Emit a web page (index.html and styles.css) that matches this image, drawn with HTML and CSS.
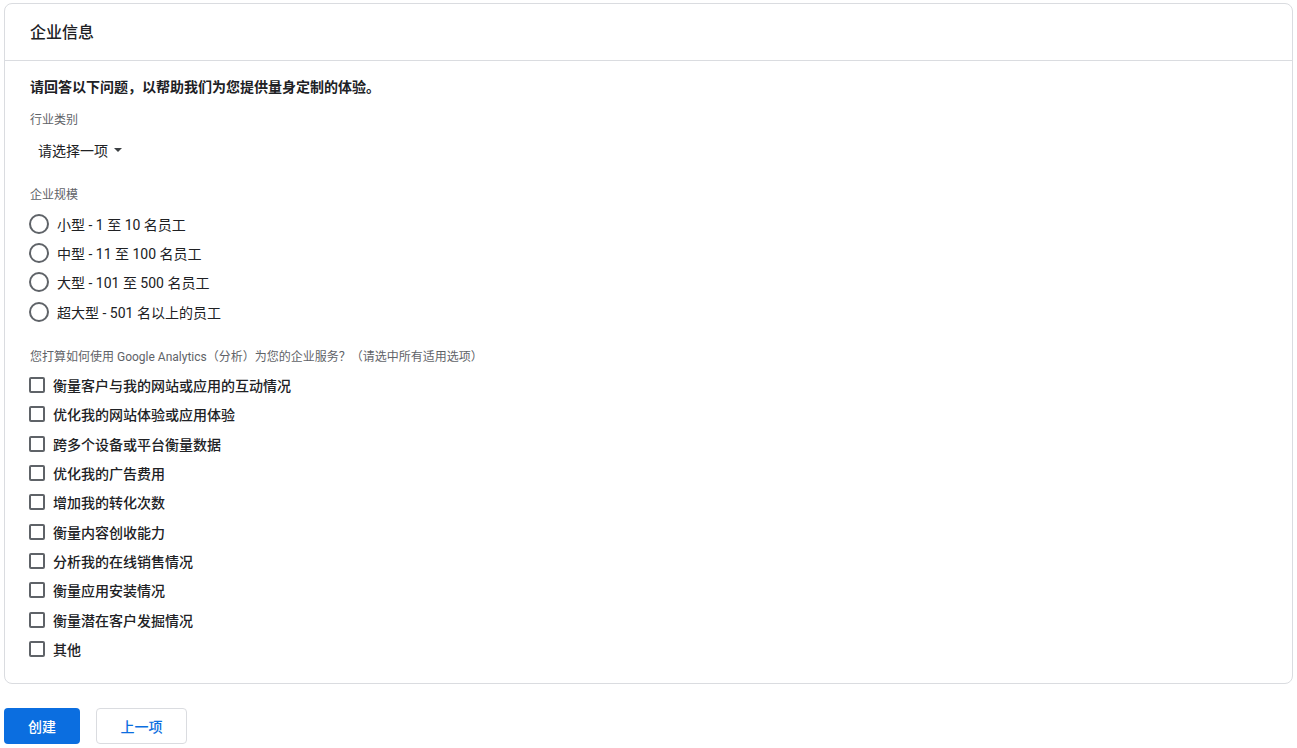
FILE: index.html
```html
<!DOCTYPE html>
<html lang="zh-CN">
<head>
  <meta charset="UTF-8"/>
  <meta name="viewport" content="width=device-width,initial-scale=1.0"/>
  <title>企业信息</title>
  <link rel="stylesheet" href="styles.css">
</head>
<body>

  <div class="card">
    <div class="card-header">企业信息</div>
    <div class="card-body">
      <p class="intro">请回答以下问题，以帮助我们为您提供量身定制的体验。</p>

      <div class="field-label">行业类别</div>
      <button class="select-btn">请选择一项<span class="caret"></span></button>

      <div class="field-label size-label">企业规模</div>
      <div class="radio-group">
        <label class="option"><span class="radio"></span>小型 - 1 至 10 名员工</label>
        <label class="option"><span class="radio"></span>中型 - 11 至 100 名员工</label>
        <label class="option"><span class="radio"></span>大型 - 101 至 500 名员工</label>
        <label class="option"><span class="radio"></span>超大型 - 501 名以上的员工</label>
      </div>

      <div class="field-label usage-label">您打算如何使用 Google Analytics（分析）为您的企业服务？（请选中所有适用选项）</div>
      <div class="check-group">
        <label class="option check"><span class="box"></span>衡量客户与我的网站或应用的互动情况</label>
        <label class="option check"><span class="box"></span>优化我的网站体验或应用体验</label>
        <label class="option check"><span class="box"></span>跨多个设备或平台衡量数据</label>
        <label class="option check"><span class="box"></span>优化我的广告费用</label>
        <label class="option check"><span class="box"></span>增加我的转化次数</label>
        <label class="option check"><span class="box"></span>衡量内容创收能力</label>
        <label class="option check"><span class="box"></span>分析我的在线销售情况</label>
        <label class="option check"><span class="box"></span>衡量应用安装情况</label>
        <label class="option check"><span class="box"></span>衡量潜在客户发掘情况</label>
        <label class="option check"><span class="box"></span>其他</label>
      </div>
    </div>
  </div>

  <div class="actions">
    <button class="btn primary">创建</button>
    <button class="btn secondary">上一项</button>
  </div>

</body>
</html>
```

FILE: styles.css
```css
:root {
  --text:    #202124;
  --muted:   #5f6368;
  --border:  #dadce0;
  --blue:    #0b6ee0;
}
*,*::before,*::after { box-sizing:border-box; margin:0; padding:0 }
body {
  font-family: Roboto, "Noto Sans CJK SC", sans-serif;
  color: var(--text);
  background: #fff;
  padding: 3px 4px 0;
}
.card {
  border: 1px solid var(--border);
  border-radius: 8px;
  background: #fff;
}
.card-header {
  height: 57px;
  display: flex; align-items: center;
  padding: 0 25px 3px;
  font-size: 16px;
  font-weight: 500;
  border-bottom: 1px solid var(--border);
}
.card-body {
  padding: 16px 25px 19px;
}
.intro {
  font-size: 14px;
  line-height: 20px;
  font-weight: 700;
}
.field-label {
  font-size: 12px;
  line-height: 16px;
  color: var(--muted);
  margin-top: 15px;
}
.select-btn {
  display: flex; align-items: center;
  height: 36px;
  margin-top: 4px;
  padding: 0 8px;
  background: none; border: none;
  font: inherit; font-size: 14px;
  color: var(--text);
  cursor: pointer;
}
.caret {
  width: 0; height: 0;
  margin-left: 6px;
  border-left: 4px solid transparent;
  border-right: 4px solid transparent;
  border-top: 4px solid #3c4043;
}
.size-label { margin-top: 19px }
.usage-label { margin-top: 23px }
.radio-group { margin-top: 6px }
.check-group { margin-top: 5px }
.option {
  display: flex; align-items: center;
  height: 29.33px;
  font-size: 14px;
  cursor: pointer;
}
.radio {
  width: 20px; height: 20px;
  margin-left: -1px;
  margin-right: 8px;
  border: 2px solid var(--muted);
  border-radius: 50%;
}
.check { font-weight: 500 }
.box {
  width: 16px; height: 16px;
  margin-left: -1px;
  margin-right: 8px;
  border: 2px solid var(--muted);
  border-radius: 2px;
}
.actions {
  display: flex; gap: 16px;
  margin-top: 24px;
}
.btn {
  height: 36px;
  border-radius: 4px;
  font: inherit; font-size: 14px;
  font-weight: 500;
  cursor: pointer;
}
.btn.primary {
  width: 76px;
  background: var(--blue);
  border: none;
  color: #fff;
}
.btn.secondary {
  width: 91px;
  background: #fff;
  border: 1px solid var(--border);
  color: var(--blue);
}
```
